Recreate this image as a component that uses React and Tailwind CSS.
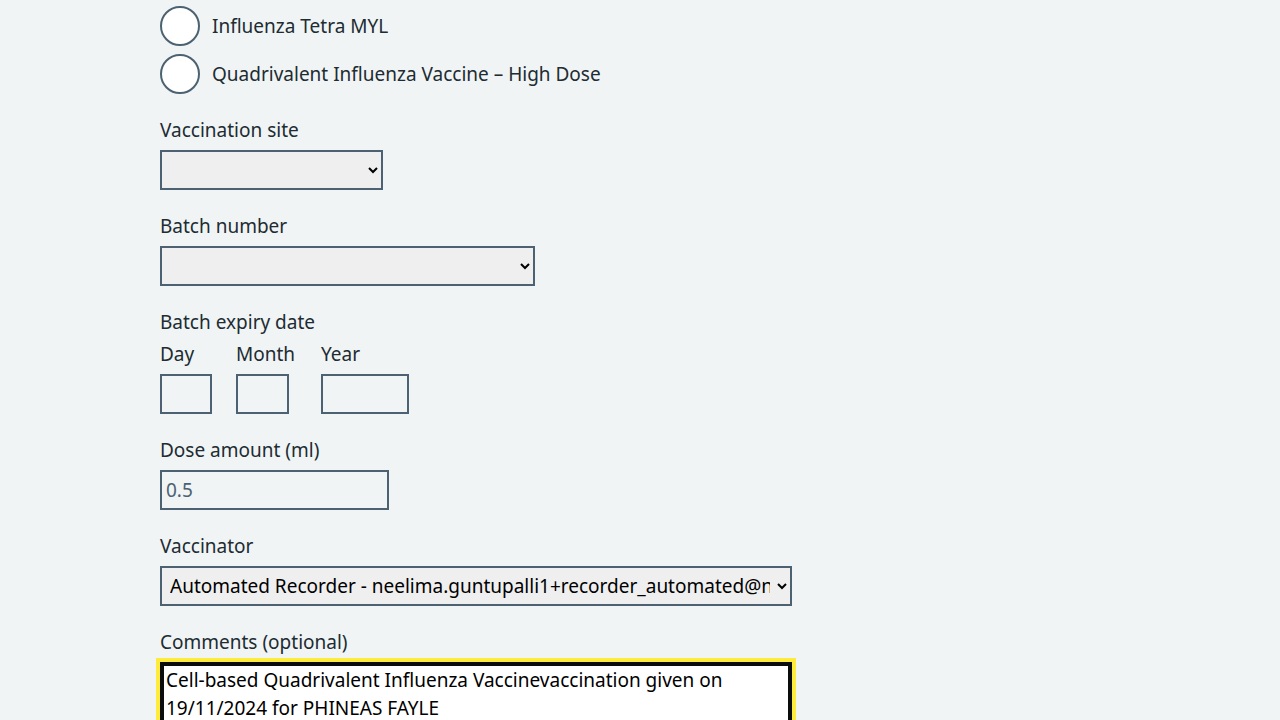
import React from 'react';

const font = { fontFamily: '"Noto Sans", "Open Sans", Arial, sans-serif' };

function Radio({ label }) {
  return (
    <label className="flex items-center gap-3 h-10">
      <span className="w-10 h-10 rounded-full border-2 border-[#4c6272] bg-white flex-shrink-0" />
      <span className="text-[19px] leading-7 text-[#212b32]">{label}</span>
    </label>
  );
}

function Label({ children }) {
  return <div className="text-[19px] leading-6 text-[#212b32] mb-2">{children}</div>;
}

function DateItem({ label, width, itemWidth }) {
  return (
    <div className={`mr-6 flex flex-col ${itemWidth}`}>
      <div className="text-[19px] leading-6 text-[#212b32] mb-2">{label}</div>
      <input type="text" className={`${width} h-10 border-2 border-[#4c6272] bg-transparent px-1 outline-none`} />
    </div>
  );
}

export default function App() {
  return (
    <div className="min-h-screen bg-[#f0f4f5]" style={font}>
      <div className="max-w-[960px] mx-auto pt-[6px]">
        {/* Vaccine choice */}
        <div className="flex flex-col gap-2 mb-6">
          <Radio label="Influenza Tetra MYL" />
          <Radio label="Quadrivalent Influenza Vaccine – High Dose" />
        </div>

        <div className="mb-6">
          <Label>Vaccination site</Label>
          <select className="block w-[223px] h-10 border-2 border-[#4c6272] bg-[#efefef] text-[19px] text-black px-1">
            <option></option>
          </select>
        </div>

        <div className="mb-6">
          <Label>Batch number</Label>
          <select className="block w-[375px] h-10 border-2 border-[#4c6272] bg-[#efefef] text-[19px] text-black px-1">
            <option></option>
          </select>
        </div>

        <div className="mb-6">
          <Label>Batch expiry date</Label>
          <div className="flex">
            <DateItem label="Day" width="w-[52px]" itemWidth="w-[52px]" />
            <DateItem label="Month" width="w-[53px]" itemWidth="w-[61px]" />
            <DateItem label="Year" width="w-[88px]" itemWidth="w-[88px]" />
          </div>
        </div>

        <div className="mb-6">
          <Label>Dose amount (ml)</Label>
          <input
            type="text"
            defaultValue="0.5"
            className="block w-[229px] h-10 border-2 border-[#4c6272] bg-transparent px-1 text-[19px] text-[#4c6272] outline-none"
          />
        </div>

        <div className="mb-6">
          <Label>Vaccinator</Label>
          <select className="block w-[632px] h-10 border-2 border-[#4c6272] bg-[#efefef] text-[19px] text-black pl-1 pr-1">
            <option>Automated Recorder - neelima.guntupalli1+recorder_automated@nhs.net</option>
          </select>
        </div>

        <div className="mb-6">
          <Label>Comments (optional)</Label>
          <textarea
            rows={5}
            defaultValue="Cell-based Quadrivalent Influenza Vaccinevaccination given on 19/11/2024 for PHINEAS FAYLE"
            className="block w-[632px] border-2 border-[#0b0c0c] shadow-[inset_0_0_0_2px_#0b0c0c] outline-4 outline-[#ffeb3b] bg-white px-1 py-0.5 text-[19px] leading-7 text-black resize-y"
          />
        </div>
      </div>
    </div>
  );
}
